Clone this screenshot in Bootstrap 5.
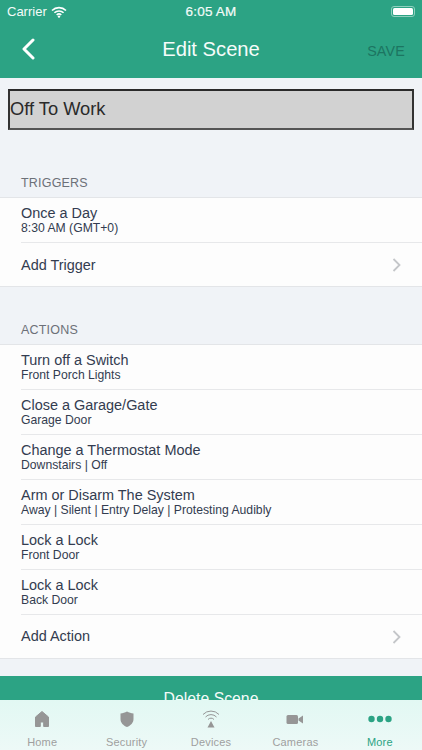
<!DOCTYPE html>
<html lang="en"><head><meta charset="utf-8"><title>Edit Scene</title>
<link rel="stylesheet" href="https://cdn.jsdelivr.net/npm/bootstrap@5.3.0/dist/css/bootstrap.min.css">
<style>
html,body{height:750px;overflow:hidden}
body{font-family:"Liberation Sans",sans-serif;background:#f0f3f7;color:#333c50;width:422px}
.hdr{background:#2ca384;color:#fff;height:78px}
.stat{height:22px;padding:4px 7px 0;line-height:16px;color:#f4fbf9}
.stat>div,.stat>span{flex:1 1 0}
.stat-time{font-size:13.5px;font-weight:400;text-align:center;letter-spacing:.2px;-webkit-text-stroke:.2px #f4fbf9}
.carrier{font-size:13px}
.battwrap{display:flex;justify-content:flex-end;padding-top:2px}
.batt{width:24px;height:11px;border:1px solid #8fd0be;border-radius:3px;padding:1px}
.batt i{display:block;height:100%;background:#fff;border-radius:1.5px}
.navline{height:54px;padding:0 21px}
.navline>*{flex:1 1 0}
.ttl{font-size:20.2px;text-align:center;flex:0 0 auto;color:#f6fcfa}
.backwrap{display:flex;margin-right:-4px}
.savebtn{font-size:14.3px;color:#1c7561;padding-top:6px;margin-right:-4px;text-align:right;letter-spacing:.2px}
.namebox{margin:11px 8px 0 8px;height:41px;background:#d2d2d2;border:2px solid #333;border-bottom-color:#555;border-top-color:#2a2a2a;font-size:18.3px;line-height:36px;padding-left:0;color:#2a2a2a;width:406px}
.seclab{font-size:12.5px;color:#6c7078;padding-left:21px;line-height:16px;letter-spacing:.2px}
.lbl1{margin-top:45px;padding-bottom:6px}
.lbl2{margin-top:35px;padding-bottom:6px}
.grp{background:#fdfdfd;border-top:1px solid #e3e5e8;border-bottom:1px solid #e3e5e8}
.itm{height:45px;margin-left:21px;border-bottom:1px solid #e7e8ea;padding-right:21px}
.itm:last-child{border-bottom:0;height:43px}
.itm-main{font-size:14.45px;line-height:17px}
.itm-sub{font-size:12.2px;line-height:13px}
.nudge{padding-top:2px}
.del{margin-top:17px;height:60px;background:#2ca384;color:#f4fbf9;font-size:15.8px;font-weight:500;text-align:center;padding:11px 0 25px;border:0;border-radius:0;width:100%;display:block;line-height:24px}
.tabs{position:fixed;left:0;right:0;bottom:0;height:50px;background:linear-gradient(#e2f8f3,#edf9f7);padding:0}
.tb{flex:1 1 0;color:#9f9f9f;font-size:11px;line-height:13px;text-align:center;padding-top:9px;letter-spacing:.2px}
.tb svg{display:block;margin:0 auto;height:20px;margin-bottom:7px}
.tb.on{color:#2ca384}
</style></head>
<body>
<header class="hdr">
 <div class="stat d-flex justify-content-between align-items-start">
  <div class="d-flex align-items-center gap-1"><span class="carrier">Carrier</span>
   <svg width="16" height="12" viewBox="0 0 16 12"><path d="M1 4.500a10 10 0 0 1 14 0M3.400 6.800a6.600 6.600 0 0 1 9.200 0M5.700 9a3.300 3.300 0 0 1 4.600 0" fill="none" stroke="#fff" stroke-width="1.600"/><circle cx="8" cy="10.600" r="1.200" fill="#fff"/></svg></div>
  <span class="stat-time">6:05 AM</span>
  <div class="battwrap"><div class="batt"><i></i></div></div>
 </div>
 <div class="navline d-flex justify-content-between align-items-center">
  <div class="backwrap"><svg width="14" height="22" viewBox="0 0 14 22"><path d="M12 2 3 11l9 9" fill="none" stroke="#fff" stroke-width="3" stroke-linecap="round" stroke-linejoin="round"/></svg></div>
  <span class="ttl">Edit Scene</span>
  <span class="savebtn">SAVE</span>
 </div>
</header>
<div class="namebox">Off To Work</div>
<div class="seclab lbl1">TRIGGERS</div>
<div class="grp">
 <div class="itm d-flex flex-column justify-content-center"><div class="itm-main">Once a Day</div><div class="itm-sub">8:30 AM (GMT+0)</div></div>
 <div class="itm d-flex justify-content-between align-items-center"><div class="itm-main nudge">Add Trigger</div>
 <svg width="9" height="14" viewBox="0 0 9 14"><path d="m1.500 1 6 6-6 6" fill="none" stroke="#c4c6c9" stroke-width="1.800"/></svg></div>
</div>
<div class="seclab lbl2">ACTIONS</div>
<div class="grp">
 <div class="itm d-flex flex-column justify-content-center"><div class="itm-main">Turn off a Switch</div><div class="itm-sub">Front Porch Lights</div></div>
 <div class="itm d-flex flex-column justify-content-center"><div class="itm-main">Close a Garage/Gate</div><div class="itm-sub">Garage Door</div></div>
 <div class="itm d-flex flex-column justify-content-center"><div class="itm-main">Change a Thermostat Mode</div><div class="itm-sub">Downstairs | Off</div></div>
 <div class="itm d-flex flex-column justify-content-center"><div class="itm-main">Arm or Disarm The System</div><div class="itm-sub">Away | Silent | Entry Delay | Protesting Audibly</div></div>
 <div class="itm d-flex flex-column justify-content-center"><div class="itm-main">Lock a Lock</div><div class="itm-sub">Front Door</div></div>
 <div class="itm d-flex flex-column justify-content-center"><div class="itm-main">Lock a Lock</div><div class="itm-sub">Back Door</div></div>
 <div class="itm d-flex justify-content-between align-items-center"><div class="itm-main">Add Action</div>
 <svg width="9" height="14" viewBox="0 0 9 14"><path d="m1.500 1 6 6-6 6" fill="none" stroke="#c4c6c9" stroke-width="1.800"/></svg></div>
</div>
<button class="del btn">Delete Scene</button>
<nav class="tabs d-flex">
 <div class="tb"><svg width="18" height="20" viewBox="0 0 18 20"><path d="M9 2.500 2.500 8v9.500H7.300V13h3.400v4.500h4.800V8z" fill="#969696" stroke="#969696" stroke-width="1" stroke-linejoin="round"/></svg>Home</div>
 <div class="tb"><svg width="16" height="20" viewBox="0 0 16 20"><path d="M8 2.500c2 1.200 4.200 1.800 6.500 1.900v5.600c0 3.800-2.800 6.600-6.500 8-3.700-1.400-6.500-4.200-6.500-8V4.400C3.800 4.300 6 3.700 8 2.500z" fill="#969696"/></svg>Security</div>
 <div class="tb"><svg width="18" height="20" viewBox="0 0 18 20"><path d="M1 5.500a11 11 0 0 1 16 0M3.500 8a7.500 7.500 0 0 1 11 0M6 10.500a4 4 0 0 1 6 0" fill="none" stroke="#969696" stroke-width="1"/><path d="M9 12l3.500 6.500h-7z" fill="#969696"/></svg>Devices</div>
 <div class="tb"><svg width="18" height="20" viewBox="0 0 18 20"><rect x="0.500" y="6" width="11.500" height="9" rx="1.500" fill="#969696"/><path d="M12.500 9.500 17 6.500v8l-4.500-3z" fill="#969696"/></svg>Cameras</div>
 <div class="tb on"><svg width="26" height="20" viewBox="0 0 26 20"><circle cx="4.500" cy="10" r="3.200" fill="#2ca384"/><circle cx="13" cy="10" r="3.200" fill="#2ca384"/><circle cx="21.500" cy="10" r="3.200" fill="#2ca384"/></svg>More</div>
</nav>
<script src="https://cdn.jsdelivr.net/npm/bootstrap@5.3.0/dist/js/bootstrap.bundle.min.js"></script>
</body></html>
